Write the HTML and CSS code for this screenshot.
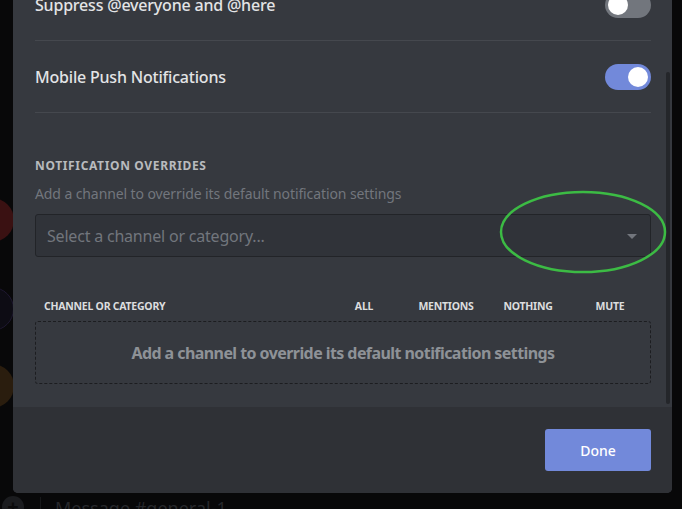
FILE: index.html
```html
<!DOCTYPE html>
<html>
<head>
<meta charset="utf-8">
<link rel="stylesheet" href="styles.css">
</head>
<body>
<div class="backdrop">
  <div class="srv srv-red"></div>
  <div class="srv srv-neon"></div>
  <div class="srv srv-food"></div>
</div>
<div class="stage">
  <div class="modal">
    <div class="scroller">
      <div class="content">
        <div class="row">
          <div class="row-title">Suppress @everyone and @here</div>
          <div class="toggle off"><div class="knob"></div></div>
        </div>
        <div class="row">
          <div class="row-title">Mobile Push Notifications</div>
          <div class="toggle on"><div class="knob"></div></div>
        </div>
        <div class="section-label">Notification Overrides</div>
        <div class="section-desc">Add a channel to override its default notification settings</div>
        <div class="select">
          <span class="placeholder">Select a channel or category...</span>
          <span class="caret"></span>
        </div>
        <div class="table-head">
          <span class="col-name">Channel or Category</span>
          <span class="col">All</span>
          <span class="col">Mentions</span>
          <span class="col">Nothing</span>
          <span class="col">Mute</span>
        </div>
        <div class="empty">Add a channel to override its default notification settings</div>
      </div>
      <div class="scrollbar"></div>
    </div>
    <div class="footer">
      <button class="done">Done</button>
    </div>
  </div>
  <div class="chatbar">
    <span class="plus">+</span>
    <span class="divider-v"></span>
    <span class="msg">Message #general-1</span>
  </div>
</div>
<svg class="annotation" width="682" height="509" viewBox="0 0 682 509">
  <ellipse cx="583" cy="232" rx="82" ry="40" fill="none" stroke="#3cbb44" stroke-width="2.5"/>
</svg>
</body>
</html>
```
FILE: styles.css
```css
* { box-sizing: border-box; }
html, body {
  margin: 0;
  padding: 0;
  width: 682px;
  height: 509px;
  overflow: hidden;
  background: #080809;
  font-family: "Noto Sans", "Open Sans", sans-serif;
}
body { position: relative; }

.backdrop {
  position: absolute;
  left: 0;
  top: 0;
  width: 13px;
  height: 509px;
}
.srv {
  position: absolute;
  left: -30px;
  width: 44px;
  height: 44px;
  border-radius: 50%;
}
.srv-red { top: 198px; background: #3a1112; }
.srv-neon { top: 287px; background: #0d0c14; border: 1px solid #1e1830; }
.srv-food { top: 364px; background: #2a1d0e; }

.stage {
  display: flex;
  flex-direction: column;
  padding-left: 13px;
  width: 672px;
}

.modal {
  width: 659px;
  margin-top: -31px;
  background: #36393f;
  border-radius: 0 0 5px 5px;
  display: flex;
  flex-direction: column;
  position: relative;
}

.scroller {
  position: relative;
  height: 438px;
  overflow: hidden;
}
.content {
  padding: 0 21px 0 22px;
}
.scrollbar {
  position: absolute;
  right: 2px;
  top: 103px;
  width: 4px;
  height: 332px;
  background: #24262a;
  border-radius: 2px;
}

.row {
  display: flex;
  align-items: center;
  justify-content: space-between;
  height: 72px;
  border-bottom: 1px solid #45484e;
  padding-top: 1px;
}
.row-title {
  color: #e3e4e6;
  font-size: 16px;
  font-weight: 500;
  letter-spacing: -0.2px;
}
.toggle {
  width: 46px;
  height: 26px;
  border-radius: 13px;
  position: relative;
  display: flex;
  align-items: center;
  padding: 0 3px;
}
.toggle.off { background: #72767d; justify-content: flex-start; }
.toggle.on { background: #7289da; justify-content: flex-end; }
.knob {
  width: 20px;
  height: 20px;
  border-radius: 50%;
  background: #ffffff;
}

.section-label {
  margin-top: 45px;
  color: #b9bbbe;
  font-size: 12px;
  line-height: 16px;
  font-weight: 700;
  text-transform: uppercase;
  letter-spacing: 0.65px;
}
.section-desc {
  margin-top: 11px;
  color: #72767d;
  font-size: 14px;
  line-height: 18px;
  letter-spacing: -0.1px;
}
.select {
  margin-top: 11px;
  height: 43px;
  background: #303339;
  border: 1px solid #222428;
  border-radius: 3px;
  display: flex;
  align-items: center;
  justify-content: space-between;
  padding: 0 13px 0 11px;
}
.placeholder {
  color: #72767d;
  font-size: 16px;
  letter-spacing: -0.2px;
}
.caret {
  width: 0;
  height: 0;
  border-left: 5px solid transparent;
  border-right: 5px solid transparent;
  border-top: 5px solid #72767d;
  margin-top: 2px;
}

.table-head {
  margin-top: 42px;
  display: grid;
  grid-template-columns: 1fr 82px 82px 82px 82px;
  padding-left: 9px;
  color: #dcddde;
  font-size: 10.5px;
  line-height: 14px;
  font-weight: 700;
  text-transform: uppercase;
  letter-spacing: -0.25px;
}
.col { text-align: center; }

.empty {
  margin-top: 8px;
  height: 63px;
  border: 1px dashed #1c1d20;
  border-radius: 3px;
  display: flex;
  align-items: center;
  justify-content: center;
  color: #8e9297;
  font-size: 16px;
  font-weight: 700;
  letter-spacing: -0.57px;
}

.footer {
  height: 86px;
  background: #2f3136;
  border-radius: 0 0 5px 5px;
  display: flex;
  justify-content: flex-end;
  align-items: center;
  padding-right: 21px;
}
.done {
  width: 106px;
  height: 42px;
  background: #7289da;
  color: #ffffff;
  border: none;
  border-radius: 3px;
  font-family: "Noto Sans", "Open Sans", sans-serif;
  font-size: 14px;
  font-weight: 500;
}

.chatbar {
  height: 16px;
  display: flex;
  align-items: center;
  margin-left: -13px;
  position: relative;
}
.plus {
  width: 22px;
  height: 22px;
  margin-left: 2px;
  margin-top: 12px;
  border-radius: 50%;
  background: #1b1c1f;
  color: #0b0b0c;
  font-size: 20px;
  line-height: 22px;
  text-align: center;
  font-weight: 700;
}
.divider-v {
  width: 1px;
  height: 16px;
  background: #17181a;
  margin-left: 16px;
  margin-top: 8px;
}
.msg {
  margin-left: 14px;
  margin-top: 14px;
  color: #26272b;
  font-size: 18px;
  line-height: 22px;
}

.annotation {
  position: absolute;
  left: 0;
  top: 0;
  pointer-events: none;
}
```
